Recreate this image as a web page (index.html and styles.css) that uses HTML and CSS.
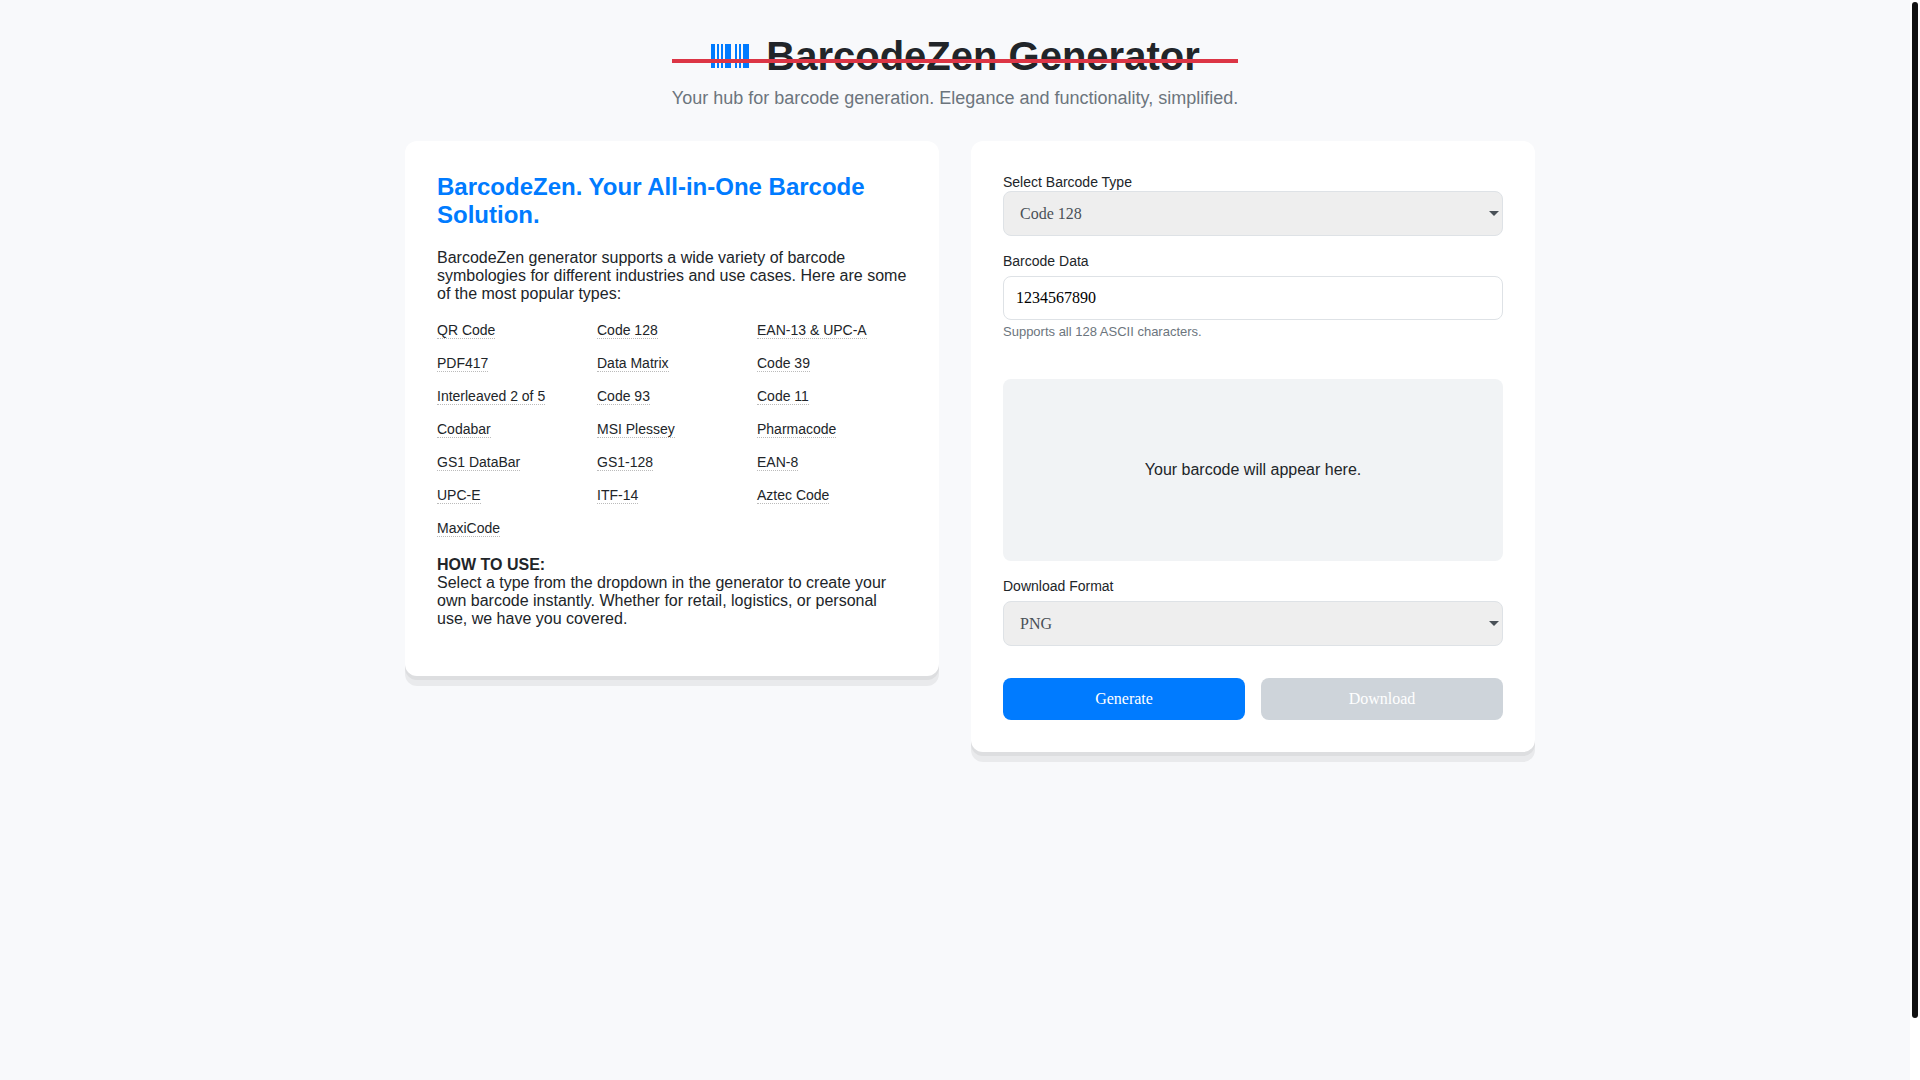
FILE: index.html
```html
<!DOCTYPE html>
<html lang="en">
  <head>
    <meta charset="UTF-8" />
    <meta name="viewport" content="width=device-width, initial-scale=1.0" />
    <title>BarcodeZen Generator</title>
    <link rel="stylesheet" href="styles.css">
  </head>

  <body>
    <header class="header">
      <h1 class="title">
        <svg class="logo" viewBox="0 0 40 24" width="40" height="24" fill="currentColor" aria-hidden="true">
          <path d="M1 0h4v24H1zM7 0h2v24H7zM11 0h2v24h-2zM15 0h6v24h-6zM25 0h2v24h-2zM29 0h2v24h-2zM33 0h6v24h-6z" />
        </svg>
        <span>BarcodeZen Generator</span>
      </h1>
      <p class="subtitle">Your hub for barcode generation. Elegance and functionality, simplified.</p>
    </header>

    <main class="container">
      <section class="card info">
        <h2>BarcodeZen. Your All-in-One Barcode Solution.</h2>
        <p>
          BarcodeZen generator supports a wide variety of barcode symbologies
          for different industries and use cases. Here are some of the most
          popular types:
        </p>
        <ul class="type-list">
          <li><a href="#">QR Code</a></li>
          <li><a href="#">Code 128</a></li>
          <li><a href="#">EAN-13 &amp; UPC-A</a></li>
          <li><a href="#">PDF417</a></li>
          <li><a href="#">Data Matrix</a></li>
          <li><a href="#">Code 39</a></li>
          <li><a href="#">Interleaved 2 of 5</a></li>
          <li><a href="#">Code 93</a></li>
          <li><a href="#">Code 11</a></li>
          <li><a href="#">Codabar</a></li>
          <li><a href="#">MSI Plessey</a></li>
          <li><a href="#">Pharmacode</a></li>
          <li><a href="#">GS1 DataBar</a></li>
          <li><a href="#">GS1-128</a></li>
          <li><a href="#">EAN-8</a></li>
          <li><a href="#">UPC-E</a></li>
          <li><a href="#">ITF-14</a></li>
          <li><a href="#">Aztec Code</a></li>
          <li><a href="#">MaxiCode</a></li>
        </ul>
        <p>
          <strong>HOW TO USE:</strong><br />
          Select a type from the dropdown in the generator to create your own
          barcode instantly. Whether for retail, logistics, or personal use, we
          have you covered.
        </p>
      </section>

      <form class="card generator">
        <div class="field type-field">
          <label for="barcode-type">Select Barcode Type</label>
          <div class="select-box">
            <select id="barcode-type">
              <option>Code 128</option>
              <option>QR Code</option>
              <option>EAN-13</option>
              <option>PDF417</option>
              <option>Data Matrix</option>
              <option>Code 39</option>
            </select>
          </div>
        </div>

        <div class="field">
          <label for="barcode-data">Barcode Data</label>
          <input id="barcode-data" type="text" value="1234567890" />
          <small class="hint">Supports all 128 ASCII characters.</small>
        </div>

        <div class="preview">
          <p>Your barcode will appear here.</p>
        </div>

        <div class="field">
          <label for="download-format">Download Format</label>
          <div class="select-box">
            <select id="download-format">
              <option>PNG</option>
              <option>SVG</option>
              <option>JPG</option>
            </select>
          </div>
        </div>

        <div class="buttons">
          <button type="button" class="btn-generate">Generate</button>
          <button type="button" class="btn-download" disabled>Download</button>
        </div>
      </form>
    </main>

    <div class="scrollbar" aria-hidden="true">
      <div class="scrollbar-thumb"></div>
    </div>
  </body>
</html>
```
FILE: styles.css
```css
* {
  margin: 0;
  padding: 0;
  box-sizing: border-box;
}

body {
  min-height: 100vh;
  padding: 32px 10px 32px 0;
  background: #f8f9fb;
  color: #212529;
  font-family: Arial, "Liberation Sans", sans-serif;
  font-size: 16px;
  line-height: 18px;
}

.header {
  width: fit-content;
  margin: 0 auto 32px;
  text-align: center;
}

.title {
  position: relative;
  display: flex;
  align-items: center;
  justify-content: center;
  gap: 16px;
  margin-bottom: 8px;
  font-size: 40px;
  line-height: 48px;
}

.title::after {
  content: "";
  position: absolute;
  top: 27px;
  left: 0;
  width: 100%;
  height: 4px;
  background: #dc3545;
}

.logo {
  color: #007bff;
}

.subtitle {
  color: #6c757d;
  font-size: 18px;
  line-height: 21px;
}

.container {
  display: grid;
  grid-template-columns: minmax(0, 534fr) minmax(0, 564fr);
  align-items: start;
  gap: 32px;
  max-width: 1160px;
  margin: 0 auto;
  padding-left: 30px;
}

.card {
  padding: 32px;
  background: #fff;
  border-radius: 12px;
  box-shadow: 0 4px 0 rgba(0, 0, 0, 0.05), 0 10px 0 rgba(0, 0, 0, 0.06);
}

.info h2 {
  margin-bottom: 20px;
  color: #007bff;
  font-size: 24px;
  line-height: 28px;
}

.info p {
  margin-bottom: 16px;
}

.type-list {
  display: grid;
  grid-template-columns: repeat(3, 1fr);
  gap: 16px 10px;
  margin: 19px 0;
  list-style: none;
  font-size: 14px;
  line-height: 17px;
}

.type-list a {
  border-bottom: 1px dotted #bbb;
  color: inherit;
  text-decoration: none;
}

.field {
  display: flex;
  flex-direction: column;
}

.type-field {
  margin-bottom: 16px;
}

label {
  margin-bottom: 6px;
  font-size: 14px;
  line-height: 18px;
}

.type-field label {
  margin-bottom: 0;
}

select,
input {
  width: 100%;
  border: 1px solid #dee2e6;
  border-radius: 8px;
  font-family: "Times New Roman", "Liberation Serif", serif;
  font-size: 16px;
}

.select-box {
  position: relative;
}

.select-box::after {
  content: "";
  position: absolute;
  top: 20px;
  right: 4px;
  border: 5px solid transparent;
  border-top-color: #495057;
  border-bottom: none;
  pointer-events: none;
}

select {
  display: block;
  height: 45px;
  padding: 0 16px;
  background: #eee;
  color: #495057;
  appearance: none;
}

input {
  height: 44px;
  padding: 12px;
  background: #fff;
  color: #000;
}

.hint {
  margin-top: 4px;
  color: #6c757d;
  font-size: 13px;
  line-height: 15px;
}

.preview {
  display: flex;
  align-items: center;
  justify-content: center;
  min-height: 182px;
  margin: 40px 0 16px;
  background: #f1f3f5;
  border-radius: 8px;
}

.buttons {
  display: flex;
  gap: 16px;
  margin-top: 32px;
}

.buttons button {
  flex: 1;
  padding: 12px;
  border: none;
  border-radius: 8px;
  color: #fff;
  font-family: "Times New Roman", "Liberation Serif", serif;
  font-size: 16px;
  line-height: 18px;
  cursor: pointer;
}

.buttons .btn-generate {
  background: #007bff;
}

.buttons .btn-download {
  background: #ced4da;
  cursor: not-allowed;
}

.scrollbar {
  position: fixed;
  top: 0;
  right: 0;
  bottom: 0;
  width: 10px;
  padding: 2px;
  background: #fff;
}

.scrollbar-thumb {
  height: 94.4%;
  background: #111;
  border-radius: 3px;
}
```
